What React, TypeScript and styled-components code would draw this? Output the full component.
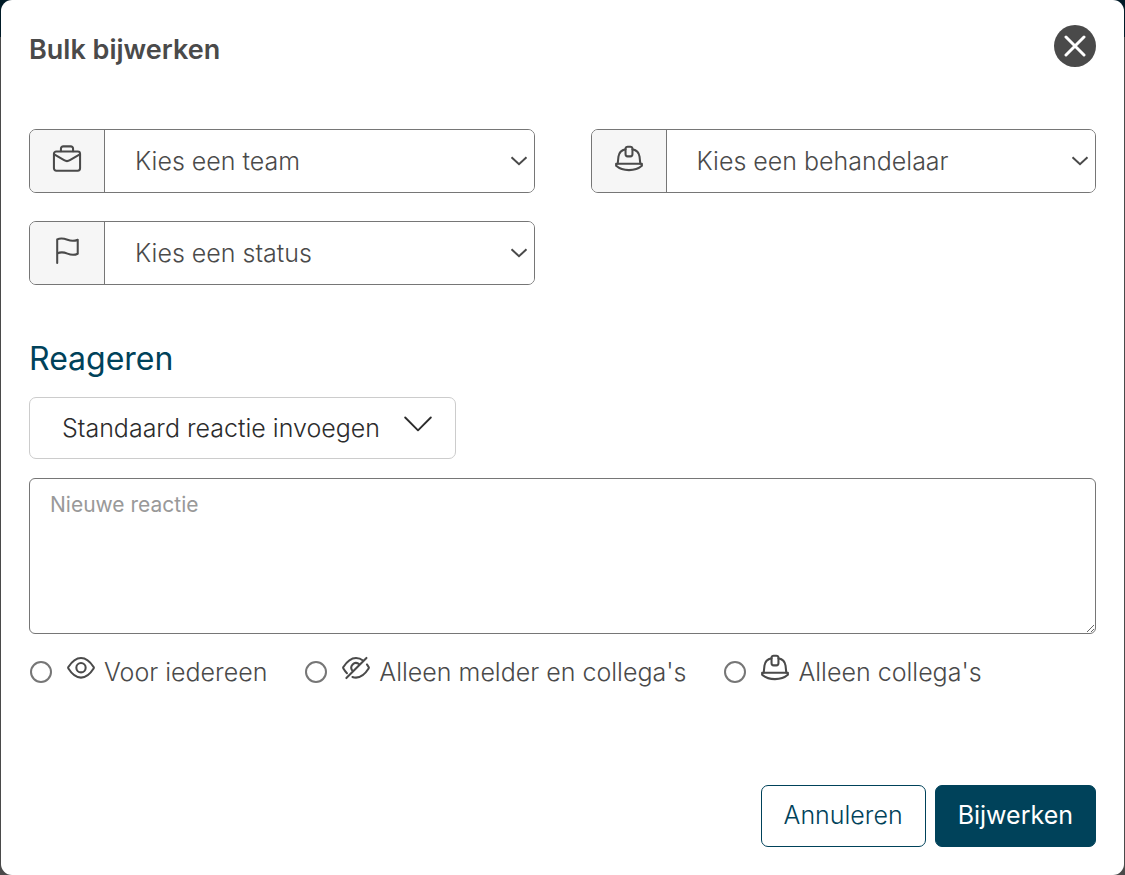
import React from "react";
import styled, { createGlobalStyle } from "styled-components";

const ink = "#4a4a4a";
const brand = "#00425a";
const line = "#767676";

const GlobalStyle = createGlobalStyle`
  *, *::before, *::after { box-sizing: border-box; }
  body {
    margin: 0;
    background: linear-gradient(#001a27 0 37px, #4a4a4a 37px);
    color: ${ink};
    font-family: Inter, "Liberation Sans", sans-serif;
    font-size: 25px;
    font-weight: 300;
    line-height: 32px;
  }
  button, select, textarea { font: inherit; color: inherit; }
`;

const Dialog = styled.form`
  display: flex;
  flex-direction: column;
  min-height: 100vh;
  margin: 0 1px;
  padding: 25px 28px 28px;
  background: #fff;
  border-radius: 11px;
`;

const Header = styled.header`
  display: flex;
  align-items: center;
  justify-content: space-between;
  height: 42px;
  margin-bottom: 62px;
`;

const Title = styled.h1`
  margin: 0;
  padding-top: 8px;
  font-size: 27px;
  font-weight: 600;
`;

const CloseButton = styled.button`
  display: grid;
  place-items: center;
  width: 42px;
  height: 42px;
  padding: 0;
  border: 0;
  border-radius: 50%;
  background: ${ink};
  color: #fff;
  cursor: pointer;
`;

const Fields = styled.div`
  display: grid;
  grid-template-columns: repeat(2, minmax(0, 1fr));
  gap: 28px 56px;
  margin-bottom: 54px;
`;

const Field = styled.div`
  display: flex;
  height: 64px;
  border: 1px solid ${line};
  border-radius: 7px;
  overflow: hidden;
`;

const FieldLabel = styled.label`
  display: grid;
  place-items: center;
  flex: 0 0 75px;
  padding-bottom: 4px;
  border-right: 1px solid ${line};
  background: #f6f6f6;
`;

const SelectBox = styled.div`
  display: grid;
  flex: 1;
  align-items: center;

  > * { grid-area: 1 / 1; }
  > svg {
    justify-self: end;
    margin-right: 6px;
    pointer-events: none;
  }
`;

const Select = styled.select`
  width: 100%;
  height: 100%;
  padding: 0 30px 1px;
  border: 0;
  background: #fff;
  color: ${ink};
  appearance: none;
`;

const SectionTitle = styled.h2`
  margin: 0 0 18px;
  font-size: 32px;
  font-weight: 400;
  line-height: 40px;
  color: ${brand};
`;

const InsertButton = styled.button`
  display: flex;
  align-items: center;
  align-self: flex-start;
  gap: 24px;
  height: 62px;
  margin-bottom: 19px;
  padding: 0 23px 0 32px;
  border: 1px solid #ccc;
  border-radius: 7px;
  background: #fff;
  color: #2c2c2c;
  cursor: pointer;

  > svg { margin-bottom: 8px; }
`;

const Reply = styled.textarea`
  display: block;
  width: 100%;
  height: 156px;
  margin-bottom: 19px;
  padding: 10px 20px;
  border: 1px solid ${line};
  border-radius: 6px;
  font-size: 21px;
  font-weight: 400;
  resize: vertical;

  &::placeholder { color: #999; }
`;

const Options = styled.div`
  display: flex;
  flex-wrap: wrap;
  gap: 12px 38px;
  padding-left: 1px;
`;

const Option = styled.label`
  display: flex;
  align-items: center;
  height: 38px;

  > svg { margin: 0 9px 8px 15px; }
`;

const Radio = styled.input`
  width: 22px;
  height: 22px;
  margin: 0;
  border: 2px solid ${line};
  border-radius: 50%;
  background: #fff;
  appearance: none;

  &:checked {
    border-color: ${brand};
    background: radial-gradient(${brand} 0 5px, #fff 6px);
  }
`;

const Footer = styled.footer`
  display: flex;
  justify-content: flex-end;
  gap: 9px;
  margin-top: auto;
  padding-top: 60px;
`;

const Action = styled.button<{ $primary?: boolean }>`
  height: 62px;
  padding: 0 22px 2px;
  border: 1px solid ${brand};
  border-radius: 7px;
  background: ${(p) => (p.$primary ? brand : "#fff")};
  color: ${(p) => (p.$primary ? "#fff" : brand)};
  font-weight: ${(p) => (p.$primary ? 400 : 300)};
  cursor: pointer;
`;

const Icon = styled.svg.attrs({
  width: 28,
  height: 28,
  viewBox: "0 0 30 30",
  fill: "none",
  stroke: "currentColor",
  strokeWidth: 2.2,
  strokeLinecap: "round",
  strokeLinejoin: "round",
  "aria-hidden": true,
})`
  display: block;
  flex: none;
  overflow: visible;
`;

const BriefcaseIcon = () => (
  <Icon>
    <rect x="1" y="7" width="28" height="20.5" rx="2.5" />
    <path d="M8.5 6.800V4A2.500 2.500 0 0 1 11 1.500h8A2.500 2.500 0 0 1 21.500 4v2.800M1.300 10l10.600 6.300a6 6 0 0 0 6.200 0L28.700 10" />
  </Icon>
);

const HelmetIcon = () => (
  <Icon>
    <path d="M11.300 4.600C6.500 5.700 4.200 8.500 3.700 12.500L2.900 20M18.700 4.600c4.800 1.100 7.100 3.900 7.600 7.900l.8 7.500" />
    <path d="M1.200 20h27.600v2.200c-3.500 3.100-8.300 4.700-13.800 4.700S4.700 25.300 1.200 22.200z" />
    <path d="M11.300 10V4a2.200 2.200 0 0 1 2.200-2.200h3A2.200 2.200 0 0 1 18.700 4v6a2.200 2.200 0 0 1-2.200 2.200h-3a2.200 2.200 0 0 1-2.200-2.200z" />
  </Icon>
);

const FlagIcon = () => (
  <Icon>
    <path d="M4.500 27.800V2.700c3.800-2 7.500-1 11 .3s7.300 1.600 11-.1v15c-3.700 1.800-7.500 1.300-11-.1s-7.200-2.200-11 0" />
  </Icon>
);

const EyeIcon = () => (
  <Icon>
    <path d="M1.500 15.600c-.4-.5-.4-1.200 0-1.700C5.200 8 9.600 4.200 15 4.200s9.800 3.800 13.500 9.700c.4.500.4 1.200 0 1.700-3.700 5.900-8.100 9.700-13.500 9.700S5.200 21.500 1.500 15.600z" />
    <circle cx="15" cy="14.700" r="5" />
  </Icon>
);

const EyeOffIcon = () => (
  <Icon>
    <path d="M5.300 20.600C3.900 19.200 2.600 17.500 1.500 15.600c-.4-.5-.4-1.200 0-1.700C5.200 8 9.600 4.200 15 4.200c2.800 0 5.300.9 7.500 2.700M26.700 11.200c.6.800 1.200 1.700 1.800 2.700.4.500.4 1.200 0 1.700-3.700 5.900-8.100 9.700-13.500 9.700-1.300 0-2.600-.2-3.800-.700M10.800 17.400a5 5 0 0 1 6.800-7M26.200 4.200 4.700 25.800" />
  </Icon>
);

const SmallChevron = () => (
  <svg width="18" height="10" viewBox="0 0 18 10" fill="none" stroke={ink} strokeWidth="2" aria-hidden="true">
    <path d="M1.500 1.200 9 8.200l7.500-7" />
  </svg>
);

const WideChevron = () => (
  <svg width="28" height="16" viewBox="0 0 28 16" fill="none" stroke="currentColor" strokeWidth="1.900" strokeLinecap="round" strokeLinejoin="round" aria-hidden="true">
    <path d="M1.200 1.500 14 14.300 26.800 1.500" />
  </svg>
);

const fields = [
  { id: "team", label: "Kies een team", icon: <BriefcaseIcon /> },
  { id: "behandelaar", label: "Kies een behandelaar", icon: <HelmetIcon /> },
  { id: "status", label: "Kies een status", icon: <FlagIcon /> },
];

const audiences = [
  { id: "iedereen", label: "Voor iedereen", icon: <EyeIcon /> },
  { id: "melder", label: "Alleen melder en collega's", icon: <EyeOffIcon /> },
  { id: "collegas", label: "Alleen collega's", icon: <HelmetIcon /> },
];

export default function App() {
  return (
    <>
      <GlobalStyle />
      <Dialog role="dialog" aria-labelledby="title" onSubmit={(e) => e.preventDefault()}>
        <Header>
          <Title id="title">Bulk bijwerken</Title>
          <CloseButton type="button" aria-label="Sluiten">
            <svg width="22" height="22" viewBox="0 0 22 22" stroke="currentColor" strokeWidth="3" strokeLinecap="round" aria-hidden="true">
              <path d="M2 2l18 18M20 2 2 20" />
            </svg>
          </CloseButton>
        </Header>

        <Fields>
          {fields.map((f) => (
            <Field key={f.id}>
              <FieldLabel htmlFor={f.id} aria-label={f.label}>{f.icon}</FieldLabel>
              <SelectBox>
                <Select id={f.id}>
                  <option>{f.label}</option>
                </Select>
                <SmallChevron />
              </SelectBox>
            </Field>
          ))}
        </Fields>

        <SectionTitle>Reageren</SectionTitle>
        <InsertButton type="button">
          Standaard reactie invoegen
          <WideChevron />
        </InsertButton>
        <Reply aria-label="Nieuwe reactie" placeholder="Nieuwe reactie" />

        <Options role="radiogroup" aria-label="Zichtbaarheid">
          {audiences.map((a) => (
            <Option key={a.id}>
              <Radio type="radio" name="audience" value={a.id} />
              {a.icon}
              {a.label}
            </Option>
          ))}
        </Options>

        <Footer>
          <Action type="button">Annuleren</Action>
          <Action type="submit" $primary>Bijwerken</Action>
        </Footer>
      </Dialog>
    </>
  );
}
